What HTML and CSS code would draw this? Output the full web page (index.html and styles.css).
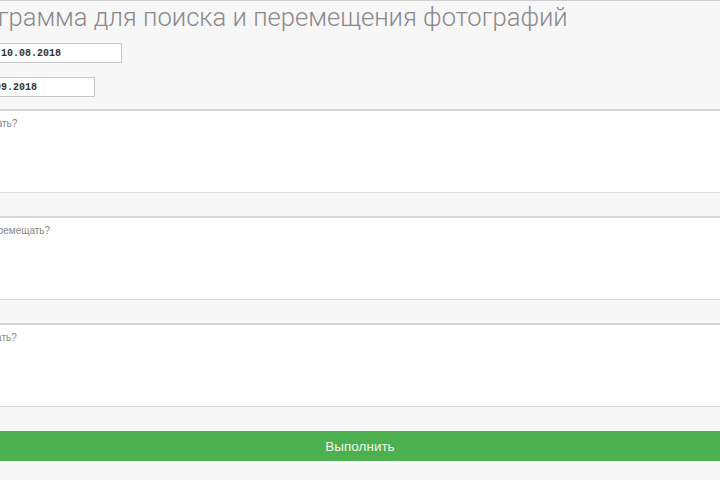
FILE: index.html
```html
<!DOCTYPE html>
<html lang="ru">
<head>
<meta charset="utf-8">
<title>Программа для поиска и перемещения фотографий</title>
<link rel="stylesheet" href="styles.css">
</head>
<body>
<div class="page">
  <h1 class="title">Программа для поиска и перемещения фотографий</h1>
  <div class="row row-from">
    <input class="date date-from" type="text" value="10.08.2018">
  </div>
  <div class="row row-to">
    <input class="date date-to" type="text" value="10.09.2018">
  </div>
  <textarea class="area" placeholder="Что искать?"></textarea>
  <textarea class="area" placeholder="Куда перемещать?"></textarea>
  <textarea class="area" placeholder="Где искать?"></textarea>
  <button class="run" type="button">Выполнить</button>
</div>
</body>
</html>
```

FILE: styles.css
```css
html, body {
  margin: 0;
  padding: 0;
  background: #f7f7f7;
  overflow: hidden;
}
body {
  border-top: 1px solid #cfcfcf;
  height: 479px;
}
.page {
  margin-left: -49px;
  width: 800px;
  display: flex;
  flex-direction: column;
}
.title {
  margin: 2px 0 0 0;
  font-family: Roboto, "Noto Sans", sans-serif;
  font-weight: 300;
  font-size: 25.6px;
  line-height: 29px;
  color: #8a8a8a;
  white-space: nowrap;
}
.row {
  display: flex;
}
.row-from {
  margin-top: 11px;
  padding-left: 47px;
}
.row-to {
  margin-top: 14px;
  padding-left: 23px;
}
.date {
  box-sizing: border-box;
  height: 20px;
  border: 1px solid #c8c8c8;
  background: #fff;
  font-family: "Liberation Mono", "DejaVu Sans Mono", monospace;
  font-size: 10px;
  font-weight: bold;
  color: #333;
  padding: 0 0 0 2px;
  margin: 0;
}
.date-from { width: 124px; }
.date-to { width: 121px; }
.area {
  box-sizing: border-box;
  display: block;
  width: 100%;
  height: 84px;
  margin: 12px 0 0 0;
  border: 1px solid #dadada;
  border-top: 2px solid #d6d6d6;
  background: #fff;
  padding: 7px 10px;
  resize: none;
  font-family: "Liberation Sans", Arial, sans-serif;
  font-size: 10px;
  color: #666;
}
.area + .area {
  margin-top: 23px;
}
.area::placeholder {
  color: #888;
}
.run {
  display: block;
  width: 100%;
  height: 30px;
  margin: 24px 0 0 0;
  border: none;
  background: #4caf50;
  color: #eef8e8;
  font-family: "Liberation Sans", Arial, sans-serif;
  font-size: 13.5px;
  padding: 0 0 0 18px;
}
```
